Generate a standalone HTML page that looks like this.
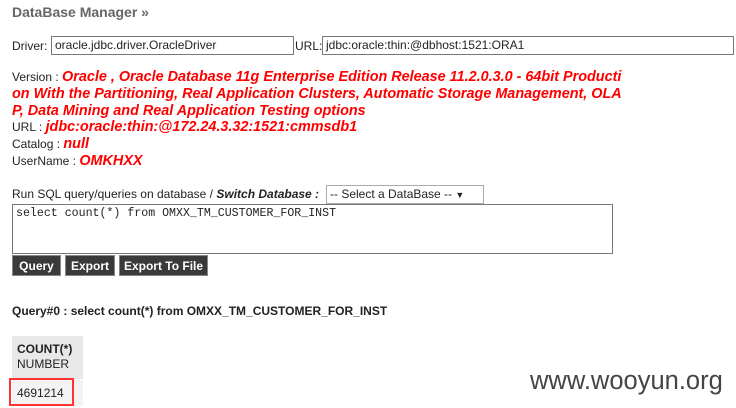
<!DOCTYPE html>
<html><head><style>
body{margin:0;width:736px;height:408px;background:#fff;font-family:"Liberation Sans",Arial,sans-serif;font-size:12px;color:#222;position:relative;overflow:hidden}
.a{position:absolute;white-space:nowrap}
.r{color:#f00;font-weight:bold;font-style:italic;font-size:14.4px}
.ln{height:16.8px;line-height:16.8px}
.inp{position:absolute;border:1px solid #777;height:19px;box-sizing:border-box;font-size:12px;line-height:17px;padding-left:3px;background:#fff}
.btn{position:absolute;top:255px;height:21px;background:#3a3a3a;color:#fff;font-weight:bold;font-size:12px;line-height:21px;text-align:center;border:1px solid #888;box-sizing:border-box}
</style></head><body>
<div class="a" style="left:12px;top:4px;font-size:14px;font-weight:bold;color:#666">DataBase Manager »</div>
<div class="a" style="left:12px;top:39px">Driver:</div>
<div class="inp" style="left:51px;top:36px;width:243px">oracle.jdbc.driver.OracleDriver</div>
<div class="a" style="left:295px;top:39px">URL:</div>
<div class="inp" style="left:322px;top:36px;width:412px">jdbc:oracle:thin:@dbhost:1521:ORA1</div>
<div class="a" style="left:12px;top:69px">
<div class="ln">Version : <span class="r">Oracle , Oracle Database 11g Enterprise Edition Release 11.2.0.3.0 - 64bit Producti</span></div>
<div class="ln"><span class="r">on With the Partitioning, Real Application Clusters, Automatic Storage Management, OLA</span></div>
<div class="ln"><span class="r">P, Data Mining and Real Application Testing options</span></div>
<div class="ln">URL : <span class="r">jdbc:oracle:thin:@172.24.3.32:1521:cmmsdb1</span></div>
<div class="ln">Catalog : <span class="r">null</span></div>
<div class="ln">UserName : <span class="r">OMKHXX</span></div>
</div>
<div class="a" style="left:12px;top:187px">Run SQL query/queries on database / <b><i>Switch Database :</i></b></div>
<div class="inp" style="left:326px;top:185px;width:158px;height:19px;border-color:#aaa;line-height:17px">-- Select a DataBase -- <span style="font-size:9px">▼</span></div>
<div class="inp" style="left:12px;top:204px;width:601px;height:50px;font-family:'Liberation Mono',monospace;font-size:11.6px;line-height:18px;padding-left:3px">select count(*) from OMXX_TM_CUSTOMER_FOR_INST</div>
<div class="btn" style="left:12px;width:49px">Query</div>
<div class="btn" style="left:65px;width:50px">Export</div>
<div class="btn" style="left:119px;width:89px">Export To File</div>
<div class="a" style="left:12px;top:304px;font-weight:bold">Query#0 : select count(*) from OMXX_TM_CUSTOMER_FOR_INST</div>
<div class="a" style="left:12px;top:336px;width:71px;height:43px;background:#e8e8e8"></div>
<div class="a" style="left:17px;top:342px;line-height:15px"><b>COUNT(*)</b><br>NUMBER</div>
<div class="a" style="left:12px;top:380px;width:71px;height:26px;background:#f3f3f3"></div>
<div class="a" style="left:9px;top:378px;width:61px;height:24px;border:2px solid #f33"></div>
<div class="a" style="left:17px;top:386px">4691214</div>
<div class="a" style="left:530px;top:367px;font-size:25.5px;color:#444">www.wooyun.org</div>
</body></html>
